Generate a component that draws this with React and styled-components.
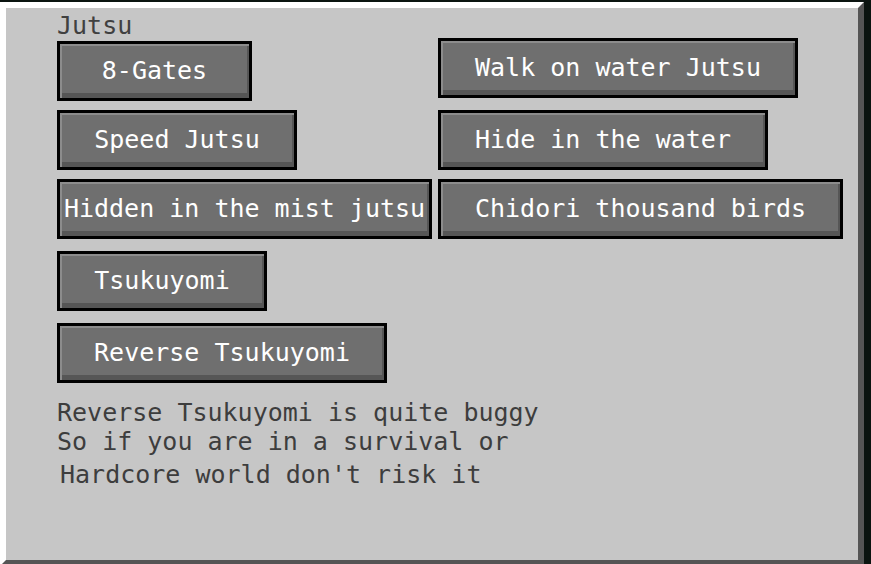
import React from 'react';
import styled, { createGlobalStyle } from 'styled-components';

const GlobalStyle = createGlobalStyle`
  html, body {
    margin: 0;
    padding: 0;
    background: #0b1410;
    overflow: hidden;
  }
  body {
    font-family: 'DejaVu Sans Mono', 'Liberation Mono', monospace;
  }
`;

const Screen = styled.div`
  width: 871px;
  height: 564px;
  overflow: hidden;
  padding-top: 2px;
  box-sizing: border-box;
`;

const Panel = styled.div`
  width: 864px;
  height: 564px;
  box-sizing: border-box;
  background: #c6c6c6;
  border-top: 6px solid #ffffff;
  border-left: 6px solid #ffffff;
  border-right: 6px solid #555555;
  border-bottom: 6px solid #555555;
  padding: 6px 0 0 51px;
`;

const Title = styled.div`
  font-size: 25px;
  line-height: 24px;
  color: #404040;
`;

const Row = styled.div`
  display: grid;
  grid-template-columns: 381px auto;
  align-items: start;
  margin-top: ${(p) => p.$mt || 0}px;
`;

const Button = styled.button`
  width: ${(p) => p.$w}px;
  height: 60px;
  margin-top: ${(p) => p.$shift || 0}px;
  box-sizing: border-box;
  border: 3px solid #000;
  background: #6f6f6f;
  box-shadow: inset 2px 2px 0 #8c8c8c, inset -2px -5px 0 #565656;
  color: #ffffff;
  font-family: 'DejaVu Sans Mono', 'Liberation Mono', monospace;
  font-size: 25px;
  line-height: 25px;
  padding: 0 0 2px;
  display: flex;
  align-items: center;
  justify-content: center;
  white-space: nowrap;
  cursor: pointer;
`;

const Note = styled.div`
  font-size: 25px;
  line-height: 29px;
  color: #3d3d3d;
  white-space: nowrap;
  margin-top: ${(p) => p.$mt || 0}px;
  margin-left: ${(p) => p.$x || 0}px;
`;

function App() {
  return (
    <Screen>
      <GlobalStyle />
      <Panel>
        <Title>Jutsu</Title>
        <Row>
          <Button $w={195} $shift={3}>8-Gates</Button>
          <Button $w={360}>Walk on water Jutsu</Button>
        </Row>
        <Row $mt={9}>
          <Button $w={240}>Speed Jutsu</Button>
          <Button $w={330}>Hide in the water</Button>
        </Row>
        <Row $mt={9}>
          <Button $w={375}>Hidden in the mist jutsu</Button>
          <Button $w={405}>Chidori thousand birds</Button>
        </Row>
        <Row $mt={12}>
          <Button $w={210}>Tsukuyomi</Button>
        </Row>
        <Row $mt={12}>
          <Button $w={330}>Reverse Tsukuyomi</Button>
        </Row>
        <Note $mt={15}>Reverse Tsukuyomi is quite buggy</Note>
        <Note>So if you are in a survival or</Note>
        <Note $mt={4} $x={3}>Hardcore world don't risk it</Note>
      </Panel>
    </Screen>
  );
}

export default App;
